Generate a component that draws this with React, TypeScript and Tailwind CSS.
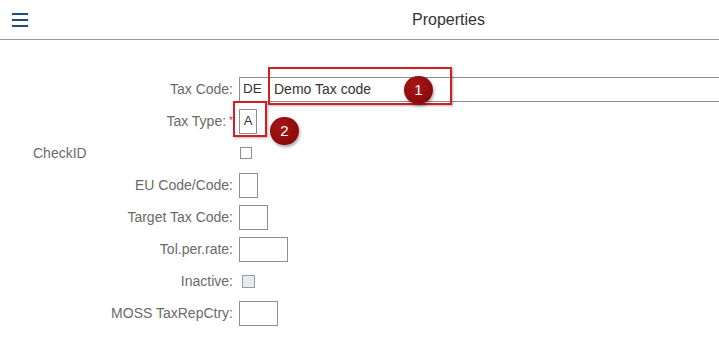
import React from "react";

const font = { fontFamily: '"Liberation Sans", Arial, sans-serif' };

function Label({ children }: { children: React.ReactNode }) {
  return (
    <div className="w-[233px] shrink-0 text-right text-[14px] text-[#6a6a6a]">{children}</div>
  );
}

function Row({ children }: { children: React.ReactNode }) {
  return <div className="flex h-[32px] items-center gap-[6px]">{children}</div>;
}

function Box({ w }: { w: string }) {
  return <div className={`${w} h-[25px] border border-[#8e8e8e] bg-white`} />;
}

function Badge({ n, className }: { n: string; className: string }) {
  return (
    <div
      className={`absolute flex h-[28px] w-[29px] items-center justify-center rounded-full bg-[radial-gradient(circle_at_40%_35%,#a81616,#7d0606)] text-[15px] text-white shadow-[1px_2px_3px_rgba(0,0,0,0.35)] ${className}`}
    >
      {n}
    </div>
  );
}

export default function App() {
  return (
    <div className="relative h-[351px] w-full overflow-hidden bg-white" style={font}>
      <header className="flex h-[40px] items-center border-b border-[#8fa0ac]">
        <div className="ml-[12px] flex w-[16px] flex-col gap-[4px]">
          <span className="block h-[2px] w-[16px] bg-[#1f4e78]" />
          <span className="block h-[2px] w-[16px] bg-[#1f4e78]" />
          <span className="block h-[2px] w-[16px] bg-[#1f4e78]" />
        </div>
        <div className="ml-[384px] text-[16px] text-[#333]">Properties</div>
      </header>

      <div className="relative pt-[33px]">
        <Row>
          <Label>Tax Code:</Label>
          <div className="flex h-[25px] flex-1 items-center border-y border-l border-[#8e8e8e] text-[14px] text-[#333]">
            <div className="w-[28px] pl-[3px] text-[13.5px]">DE</div>
            <div className="flex h-full flex-1 items-center border-l border-[#8e8e8e] pl-[5px]">Demo Tax code</div>
          </div>
        </Row>
        <Row>
          <Label>
            Tax Type:<span className="relative -top-[2px] ml-[3px] text-[10px] text-[#c33]">*</span>
          </Label>
          <div className="flex h-[25px] w-[18px] items-center justify-center border border-[#8e8e8e] text-[13px] text-[#333]">
            A
          </div>
        </Row>
        <Row>
          <div className="w-[233px] shrink-0 pl-[33px] text-[14px] text-[#6a6a6a]">CheckID</div>
          <div className="ml-[1px] h-[12px] w-[12px] border border-[#8e8e8e] bg-white" />
        </Row>
        <Row>
          <Label>EU Code/Code:</Label>
          <Box w="w-[19px]" />
        </Row>
        <Row>
          <Label>Target Tax Code:</Label>
          <Box w="w-[29px]" />
        </Row>
        <Row>
          <Label>Tol.per.rate:</Label>
          <Box w="w-[49px]" />
        </Row>
        <Row>
          <Label>Inactive:</Label>
          <div className="ml-[3px] h-[13px] w-[13px] border border-[#9a9a9a] bg-[#e6e9ee]" />
        </Row>
        <Row>
          <Label>MOSS TaxRepCtry:</Label>
          <Box w="w-[39px]" />
        </Row>

        <div className="absolute left-[268px] top-[27px] h-[38px] w-[184px] border-2 border-[#d01f25] shadow-[1px_1px_2px_rgba(0,0,0,0.3)]" />
        <Badge n="1" className="left-[404px] top-[36px]" />
        <div className="absolute left-[233px] top-[61px] h-[36px] w-[34px] border-2 border-[#d01f25] shadow-[1px_1px_2px_rgba(0,0,0,0.3)]" />
        <Badge n="2" className="left-[270px] top-[77px]" />
      </div>
    </div>
  );
}
